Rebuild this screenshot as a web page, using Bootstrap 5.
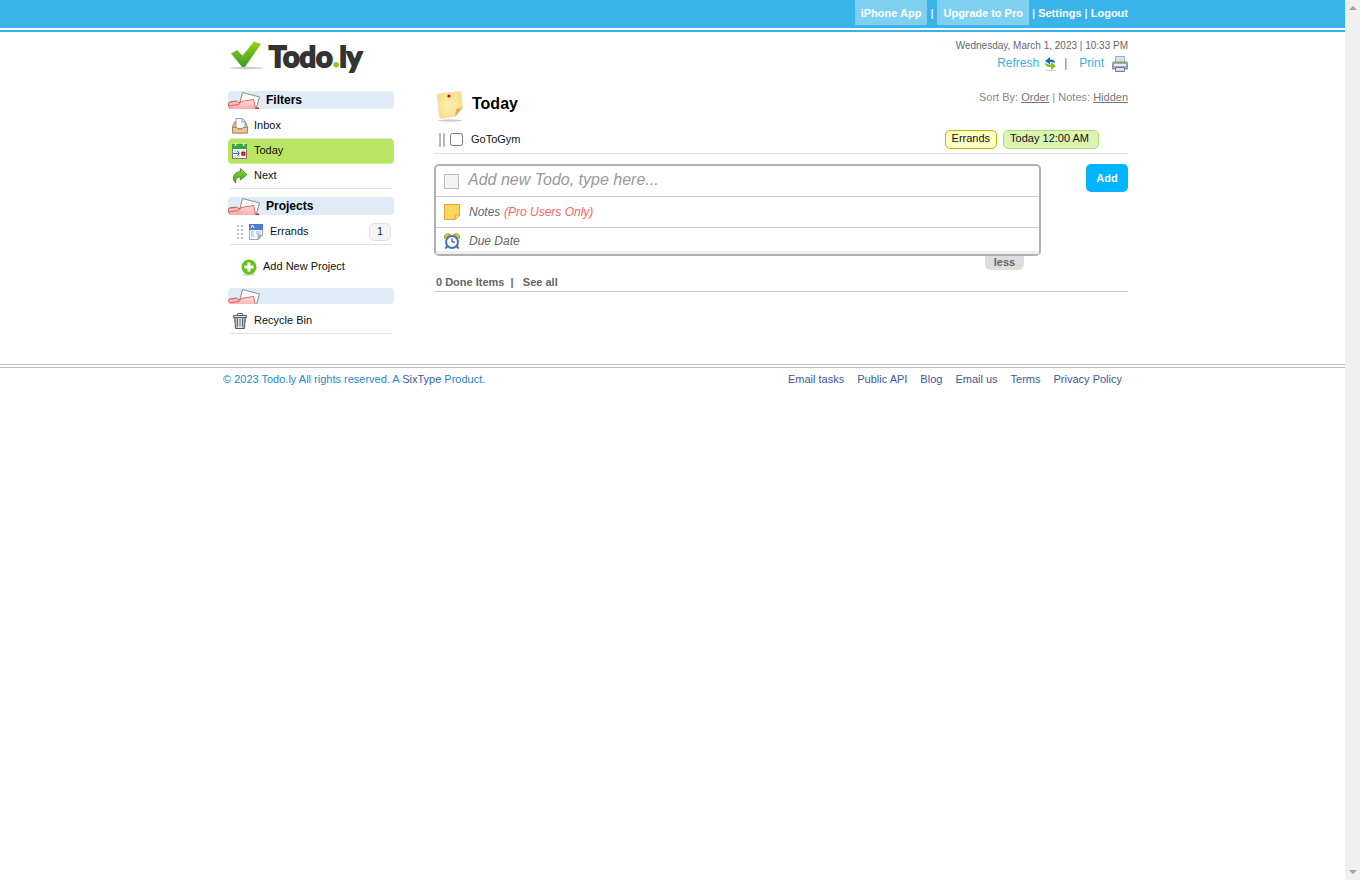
<!DOCTYPE html>
<html lang="en">
<head>
<meta charset="utf-8">
<meta name="viewport" content="width=device-width, initial-scale=1">
<title>Todo.ly</title>
<link href="https://cdn.jsdelivr.net/npm/bootstrap@5.3.0/dist/css/bootstrap.min.css" rel="stylesheet">
<style>
body{font-family:"Liberation Sans",Arial,sans-serif;font-size:11px;line-height:16px;color:#111;background:#fff}
a{text-decoration:none}
svg{display:block;flex:none}
.wrap{width:100%;max-width:911px;margin-left:auto;margin-right:auto}
.topbar{background:#38b4e8;height:28px;color:#d8eef9;font-weight:bold}
.topline{border-top:2px solid #38b4e8;margin-top:2px}
.topbar a{color:#fff}
.topbar .wrap>*{padding-top:5px;height:25px}
.topbar .promo{background:#7fcff0;padding-left:6px;padding-right:6px}
.topbar .bar-sep{padding-left:3px;padding-right:4px}
.site-head{height:59px;padding-top:5px}
.brand-link{padding:3px 0 0 11px;color:#333}
.brand-name{font:bold 29px/31px Lato,"Open Sans",sans-serif;-webkit-text-stroke:2px #333;color:#333;padding-left:1px}
.brand-name b{color:#8dcb17;-webkit-text-stroke:1px #8dcb17}
.clock{font-size:10px;line-height:18px;color:#666}
.tools{font-size:12px;line-height:16px;color:#777}
.tools a{color:#38b0e3}
.tools span{padding-bottom:2px}
.side{width:166px;margin-left:11px;flex:none}
.side-head{background:#dfebf5;border-radius:4px;height:18px;font-size:12px;line-height:18px;font-weight:bold;color:#000;margin-bottom:5px;overflow:hidden}
.side-head.bare{height:16px}
.side-head h2{font:inherit;margin:0;padding-left:5px}
.side-row{height:25px;margin:0 2px;padding:0 2px;border-bottom:1px solid #e2e2e2;color:#111;gap:6px}
.side-row span,.side-row a{line-height:22px;height:24px}
.side-row.current{margin:0;padding:0 4px;background:#b8e663;border-radius:4px;border-bottom-color:#cdee90}
.side-row .pill{width:22px;height:18px;line-height:15px;font-size:10px;text-align:center;background:#f4f4f4;border:1px solid #ddd;border-radius:6px;margin-right:-1px}
.new-project{height:43px;gap:5px;padding-left:12px}
.new-project span{padding-bottom:2px}
.content-col{margin-left:40px;min-width:0}
.page-title{font-size:16px;line-height:26px;font-weight:bold;color:#000;margin:0}
.sort{color:#888;line-height:13px}
.sort a{color:#777;text-decoration:underline}
.task{height:28px;border-bottom:1px solid #e2e2e2;padding-left:5px;gap:5px}
.task label{line-height:24px;height:26px;padding-left:3px}
.grip{width:6px;height:14px;border:solid #bbb;border-width:0 2px}
.task input{width:13px;height:13px;margin:0}
.chip{height:19px;line-height:15px;padding:0 6px;border-radius:5px;border:1px solid}
.chip-project{background:#ffffc4;border-color:#bdb900}
.chip-date{background:#dcf4b2;border-color:#b3db77;padding-right:9px;margin:0 29px 0 1px}
.entry-form{padding-top:10px}
.entry{max-width:607px;border:2px solid #b0b0b0;border-radius:5px;background:#fff}
.entry-row{height:31px;padding-left:8px;border-bottom:1px solid #ccc;font-size:12px;font-style:italic;gap:9px}
.entry-row.last{height:26px;border-bottom:3px solid #eee;padding-top:2px}
.entry input[type=text]{border:0;padding:0;background:none;font:inherit;outline:0;min-width:0}
.entry ::placeholder{color:#666;opacity:1}
.entry input[type=text].new-todo{font-size:16px;line-height:26px;padding-bottom:2px}
.entry .new-todo::placeholder{color:#999}
.entry .notes{width:35px}
.pro{color:#f96464}
.fake-box{width:15px;height:15px;appearance:none;border:1px solid #bbb;background:#f3f3f3;margin:0}
.add-btn{width:42px;height:28px;border:0;border-radius:5px;background:#00b4ff;color:#fff;font-weight:bold}
.less-btn{width:39px;height:14px;line-height:12px;border:0;padding:0 0 2px;border-radius:0 0 6px 6px;background:#ddd;color:#666;font-weight:bold;margin-left:551px}
.done{font-weight:bold;color:#666;border-bottom:1px solid #ccc;height:22px;padding:4px 2px 0}
.done a{color:#666}
.foot{border-top:1px solid #bbb;margin-top:30px;padding-top:2px}
.foot-in{border-top:1px solid #bbb;padding-top:3px;color:#1a8bc0}
.foot-in .wrap{padding:0 6px}
.foot a{color:#3b5998}
.foot-nav{gap:13px}
.rail{width:15px;height:100vh;top:0;background:#f0f0f0;flex:none}
</style>
</head>
<body>
<svg width="0" height="0" class="position-absolute" aria-hidden="true">
  <defs>
    <linearGradient id="tick" x2="0" y2="1"><stop stop-color="#9bd414"/><stop offset="1" stop-color="#3b9a2c"/></linearGradient>
    <linearGradient id="red" x2="0" y2="1"><stop stop-color="#ffe0de"/><stop offset="1" stop-color="#f08c8c"/></linearGradient>
    <linearGradient id="grn" x2="0" y2="1"><stop stop-color="#8fdc3a"/><stop offset="1" stop-color="#3d9c14"/></linearGradient>
    <radialGradient id="paper"><stop stop-color="#fff0b0"/><stop offset="1" stop-color="#f8df8c"/></radialGradient>
    <linearGradient id="steel" x2="1"><stop stop-color="#8c99a6"/><stop offset=".5" stop-color="#eef2f6"/><stop offset="1" stop-color="#8593a1"/></linearGradient>
    <symbol id="folder" viewBox="0 0 33 18">
      <path d="M14.500 1.500 31.500 6 27.500 20l-17-3z" fill="#fff" stroke="#888"/>
      <path d="M28.500 16.500h2.500V18h-3z" fill="#d22"/>
      <path d="M2 20 .5 12.500 1.500 11 8.500 10 10.500 11.500l14-1 2 9z" fill="#fbb9b7" stroke="#c65454"/>
      <path d="M3 24 .5 15 11 13.500l2-3L25.500 8.500l3.500 15z" fill="url(#red)" stroke="#d66"/>
    </symbol>
  </defs>
</svg>
<div class="d-flex">
<div class="flex-grow-1">
  <nav class="topbar">
    <div class="wrap d-flex justify-content-end">
      <a href="#" class="promo">iPhone App</a><span class="bar-sep">|</span>
      <a href="#" class="promo">Upgrade to Pro</a>
      <span class="account">&nbsp;| <a href="#">Settings</a> | <a href="#">Logout</a></span>
    </div>
  </nav>
  <div class="topline"></div>

  <header class="wrap site-head d-flex justify-content-between">
    <a href="#" class="brand-link d-flex align-items-start">
      <svg width="40" height="32" viewBox="0 0 40 32"><ellipse cx="18.500" cy="28" rx="17" ry="1.200" fill="#ccc"/><path d="M3 13.500 9 10l5.500 5.500L26 1.500 33 4 17 27h-3z" fill="url(#tick)"/></svg>
      <span class="brand-name">Todo<b>.</b>ly</span>
    </a>
    <div class="text-end">
      <div class="clock">Wednesday, March 1, 2023 | 10:33 PM</div>
      <div class="tools d-flex align-items-center justify-content-end">
        <a href="#" class="d-flex align-items-center"><span>Refresh</span>
          <svg class="ms-1" width="16" height="16" viewBox="0 0 16 16"><path d="M2 5l5-4v2.500c4 0 5 1.500 5 4C11 6.500 10 6 7 6v2.500z" fill="#1273b5"/><path d="M13 10 8 6v2.500C5 8.500 3 8 2 6c0 4 2 5 6 5v3z" fill="#83bf22"/><path d="M3 14.500h10" stroke="#ccc"/></svg></a>
        <span class="ps-1 pe-2">&#8202;|</span>
        <a href="#" class="d-flex align-items-center ms-1"><span>Print</span>
          <svg class="ms-2" width="16" height="16" viewBox="0 0 16 16"><path d="M3.500 7V.5h9V7" fill="#cfe3fa" stroke="#8faed0"/><path d="M1 6h14l1 3v4H0V9z" fill="#a7a7ad" stroke="#777" stroke-width=".7"/><path d="M2 9h12" stroke="#eee" stroke-width="2"/><path d="M3 6.500h10" stroke="#8ab52c"/><path d="M3.500 11.500h9v4h-9z" fill="#cfe3fa" stroke="#6e829a"/></svg></a>
      </div>
    </div>
  </header>

  <main class="wrap d-flex align-items-start">
    <aside class="side">
      <div class="side-head d-flex"><svg width="33" height="18"><use href="#folder"/></svg><h2>Filters</h2></div>
      <a href="#" class="side-row d-flex align-items-center">
        <svg width="16" height="16" viewBox="0 0 16 16"><path d="M.5 9 2.500 4h11l2 5v6H.5z" fill="#e0b080" stroke="#b98550"/><path d="M4 .5h6.500L13 3v7.500H4z" fill="#f2f8ff" stroke="#8fa5b8"/><path d="M10 1v3h3" fill="none" stroke="#8fa5b8"/><path d="M.5 9.500H5l1 1.500h4l1-1.500h4.500v5.500H.5z" fill="#eac59b" stroke="#b98550"/></svg>
        <span>Inbox</span></a>
      <a href="#" class="side-row current d-flex align-items-center">
        <svg width="16" height="16" viewBox="0 0 16 16"><path d="M.5 2h14v13.500H.5z" fill="#fff" stroke="#777"/><path d="M0 1h15v5H0z" fill="#37a33c"/><path d="M3.500 0v3M11.500 0v3" stroke="#fff" stroke-width="1.500"/><path d="M2 8h2M6 8h2M10 8h3M2 13h2M6 13h2" stroke="#bbb"/><path d="M1 10.500h6M5 8l2.500 2.500L5 13" stroke="#1681d0" fill="none"/><path d="M10 9.500h2.500v2.500H10z" fill="#fff" stroke="#d00000" stroke-width="1.500"/></svg>
        <span>Today</span></a>
      <a href="#" class="side-row d-flex align-items-center">
        <svg width="16" height="16" viewBox="0 0 16 16"><path d="M4 15C-.5 12 .5 4 8.500 3.500V.5l6.500 6-6.500 5.500V9C5 9 3 11 4 15z" fill="url(#grn)" stroke="#3d8c1c" stroke-width=".8"/></svg>
        <span>Next</span></a>

      <div class="side-head d-flex mt-2"><svg width="33" height="18"><use href="#folder"/></svg><h2>Projects</h2></div>
      <div class="side-row d-flex align-items-center">
        <svg class="ms-1" width="7" height="16" viewBox="0 0 7 16"><path d="M2 1v14M6 1v14" stroke="#bbb" stroke-width="2" stroke-dasharray="2"/></svg>
        <svg width="15" height="16" viewBox="1 0 15 16"><path d="M1.500.5h13v11l-4 4h-9z" fill="#f4f8fd" stroke="#96a8c0"/><path d="M1 0h14v6H1z" fill="#4a7ecb"/><path d="M3 4 4.500 1 6 4" stroke="#fff" fill="none"/><path d="M3 8h3M3 10h3M3 12h3M8 8h5M8 10h4" stroke="#9fb4d0"/><path d="M9 15.500 10 10l4.500 1z" fill="#7dc3ee"/><path d="M10 15l4-3.500" stroke="#e8a33a"/></svg>
        <a href="#" class="text-reset flex-grow-1">Errands</a><span class="pill">1</span></div>
      <a href="#" class="new-project d-flex align-items-center text-reset">
        <svg width="18" height="18" viewBox="0 0 18 18"><ellipse cx="9" cy="16.500" rx="6" ry="1" fill="#ccc"/><circle cx="9" cy="9" r="7.500" fill="#62c417"/><path d="M9 4.500v9M4.500 9h9" stroke="#fff" stroke-width="3"/></svg>
        <span>Add New Project</span></a>

      <div class="side-head bare"><svg width="33" height="18"><use href="#folder"/></svg></div>
      <a href="#" class="side-row d-flex align-items-center">
        <svg width="16" height="16" viewBox="0 0 16 16"><path d="M2.500 4h11l-1 11.500h-9z" fill="url(#steel)" stroke="#53606c"/><path d="M5.500 5.500v8M8 5.500v8M10.500 5.500v8" stroke="#66737f"/><path d="M1.500 2.500h13v2h-13z" fill="#dfe5ea" stroke="#53606c"/><path d="M5.500 2V.5h5V2" fill="none" stroke="#53606c"/></svg>
        <span>Recycle Bin</span></a>
    </aside>

    <section class="content-col flex-grow-1">
      <div class="d-flex justify-content-between align-items-start mb-1">
        <div class="d-flex">
          <svg width="34" height="31" viewBox="-3 0 34 31"><ellipse cx="13" cy="29.500" rx="12" ry="1.200" fill="#ccc"/><path d="M0 3.500Q0 3 1 3L23 .5Q24 .5 24 1.500L25.500 16.500 19 25 5 27.500Q3 27.500 2.500 26z" fill="url(#paper)" stroke="#ecd9a0" stroke-width=".6"/><path d="M18 25.500 19.500 18l6-1.500z" fill="#d6a75c"/><circle cx="12" cy="5" r="1.600" fill="#b31412"/></svg>
          <h1 class="page-title ms-1">Today</h1>
        </div>
        <div class="sort">Sort By: <a href="#">Order</a> | Notes: <a href="#">Hidden</a></div>
      </div>
      <div class="task d-flex align-items-center">
        <span class="grip"></span>
        <input type="checkbox" id="t1"><label for="t1" class="flex-grow-1">GoToGym</label>
        <span class="chip chip-project">Errands</span><span class="chip chip-date">Today 12:00 AM</span>
      </div>
      <form class="entry-form d-flex justify-content-between align-items-start" onsubmit="return false">
        <div class="flex-grow-1">
          <div class="entry">
            <div class="entry-row d-flex align-items-center">
              <input type="checkbox" class="fake-box" disabled aria-label="Done">
              <input type="text" class="new-todo flex-grow-1" placeholder="Add new Todo, type here..." aria-label="New todo"></div>
            <div class="entry-row d-flex align-items-center">
              <svg width="16" height="16" viewBox="0 0 16 16"><path d="M.5.5h15V11L11 15.500H.5z" fill="#fbd75c" stroke="#eda52d"/><path d="M11 15.500 11.500 11H15.500z" fill="#fff0a8" stroke="#eda52d"/></svg>
              <span class="d-flex"><input type="text" id="notes" class="notes" placeholder="Notes" disabled>
              <label for="notes" class="pro">(Pro Users Only)</label></span></div>
            <div class="entry-row last d-flex align-items-center">
              <svg width="16" height="16" viewBox="0 0 16 16"><path d="M1.500 15.500l3-4M14.500 15.500l-3-4" stroke="#666" stroke-width="2"/><path d="M.5 5.500C-.5 2 3-.5 6.500 1.500zM15.500 5.500C16.500 2 13-.5 9.500 1.500z" fill="#f7cf35" stroke="#b98c10"/><circle cx="8" cy="9" r="6" fill="#f3f9ff" stroke="#3a79c0" stroke-width="2"/><path d="M8 5.500V9h3" fill="none" stroke="#333"/></svg>
              <input type="text" class="flex-grow-1" placeholder="Due Date" aria-label="Due date"></div>
          </div>
          <button type="button" class="less-btn d-block">less</button>
        </div>
        <button class="add-btn">Add</button>
      </form>
      <div class="done"><a href="#">0 Done Items</a>&nbsp; |&nbsp;&nbsp; <a href="#">See all</a></div>
    </section>
  </main>

  <footer class="foot"><div class="foot-in"><div class="wrap d-flex justify-content-between">
    <span>© 2023 Todo.ly All rights reserved. A <a href="#">SixType</a> Product.</span>
    <nav class="foot-nav d-flex"><a href="#">Email tasks</a><a href="#">Public API</a><a href="#">Blog</a><a href="#">Email us</a><a href="#">Terms</a><a href="#">Privacy Policy</a></nav>
  </div></div></footer>
</div>
<div class="rail sticky-top d-flex flex-column justify-content-between align-items-center py-1">
  <svg width="8" height="8" viewBox="0 0 8 8"><path d="M0 6 4 2l4 4z" fill="#a3a3a3"/></svg>
  <svg width="8" height="8" viewBox="0 0 8 8"><path d="M0 2l4 4 4-4z" fill="#a3a3a3"/></svg>
</div>
</div>
<script src="https://cdn.jsdelivr.net/npm/bootstrap@5.3.0/dist/js/bootstrap.bundle.min.js"></script>
</body>
</html>
